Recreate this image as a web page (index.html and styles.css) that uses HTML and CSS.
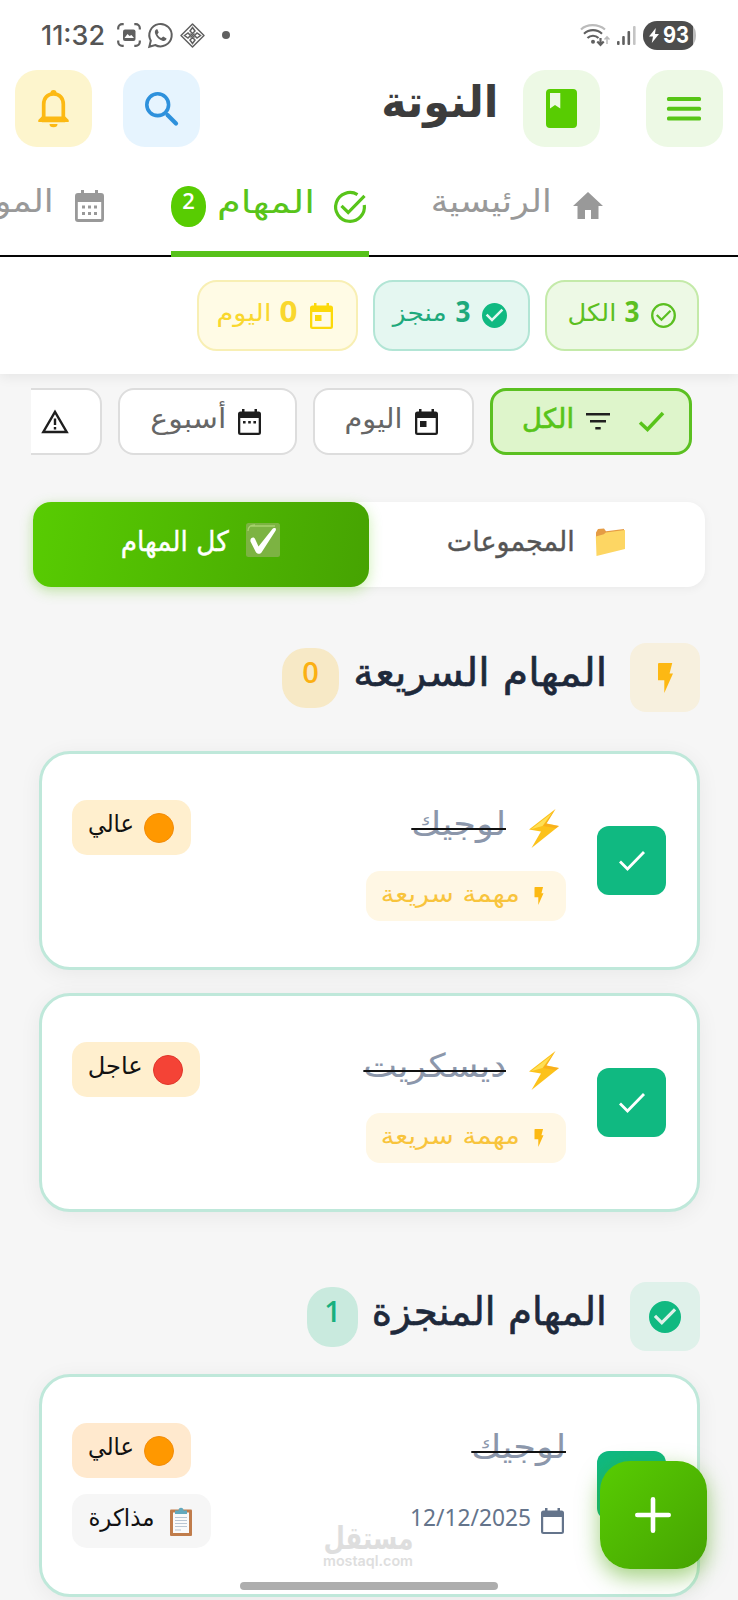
FILE: index.html
```html
<!DOCTYPE html>
<html lang="ar" dir="rtl">
<head>
<meta charset="utf-8">
<title>النوتة</title>
<link rel="stylesheet" href="styles.css">
</head>
<body>
<svg class="defs" width="0" height="0">
  <symbol id="bolt" viewBox="0 0 10 20"><path d="M.5 0h9L7.700 7H10L4.200 20V11.500H0V.5z"/></symbol>
  <symbol id="zap" viewBox="0 0 31 39"><path d="M27.5 0 1 20.500l12 2L3.500 39 31 17l-12.500-2.500z" fill="#fcc21b"/><path d="M27.500 0 18.500 14.500 31 17l-3 2.300-13-2.300z" fill="#f79c1d" opacity=".45"/><path d="M3 20.200 24 4 14.500 17z" fill="#ffdf55"/></symbol>
  <symbol id="checkfill" viewBox="0 0 24 24"><path d="M12 0a12 12 0 1 0 0 24 12 12 0 0 0 0-24zM9.600 18l-6-6 1.700-1.700 4.300 4.300 9.100-9.100L20.400 7.200z"/></symbol>
  <symbol id="tick" viewBox="0 0 28 21"><path d="M2 11.500l7.500 7.500L26 2" fill="none" stroke="currentColor" stroke-width="2.800"/></symbol>
</svg>
<div class="screen">
  <div class="status" dir="ltr">
    <span class="t time" data-w="64">11:32</span>
    <svg class="s-cap" width="24" height="24" viewBox="0 0 24 24"><g fill="none" stroke="#606060" stroke-width="2.200"><path d="M1.200 6.500V5a4 4 0 0 1 4-3.800h1.500M17.300 1.200h1.500a4 4 0 0 1 4 3.800v1.500M22.800 17.500V19a4 4 0 0 1-4 3.800h-1.500M6.700 22.800H5.200a4 4 0 0 1-4-3.800v-1.500"/></g><rect x="6" y="6.500" width="12.500" height="11.500" rx="2" fill="#606060"/><path d="M7.500 15l3-4 2 2 2-1 2.500 3z" fill="#fff"/></svg>
    <svg class="s-wa" width="25" height="25" viewBox="0 0 25 25"><path d="M1.300 23.700l1.500-6A11.200 11.200 0 1 1 7.200 22z" fill="none" stroke="#606060" stroke-width="2"/><path d="M8.500 6.200c-1.600.9-2.300 2.600-1 5.200 1.500 3.100 3.800 5.200 6.800 6.300 2.200.7 3.900-.3 4.300-2.300l-3.400-1.900-1.800 1.600c-2-.8-3.200-2.200-4-3.900l1.300-1.700-1.300-3.200z" fill="#606060"/></svg>
    <svg class="s-dia" width="25" height="25" viewBox="0 0 25 25"><path d="M12.500 1 24 12.500 12.500 24 1 12.500z" fill="none" stroke="#606060" stroke-width="1.500" stroke-linejoin="round"/><path d="M12.500 4.500 15 8l-2.500 2.500L10 8zM12.500 14.500 15 17l-2.500 3.500L10 17zM4.500 12.500 8 10l2.500 2.500L8 15zM14.500 12.500 17 10l3.500 2.500L17 15z" fill="none" stroke="#606060" stroke-width="1.500"/><path d="M10.500 10.500l4 4M14.500 10.500l-4 4" stroke="#606060" stroke-width="1.300"/></svg>
    <i class="dot"></i>
    <svg class="s-wifi" width="30" height="23" viewBox="0 0 30 23"><g fill="none" stroke="#606060" stroke-width="2.200"><path d="M1 5.500C7-.3 18-.3 25 5.500" stroke="#bbb"/><path d="M4 9.700c5-4.700 13-4.700 18 0M7.500 14c3-3 8-3 11 0"/><path d="M20.500 14v6M17.300 17.500l3.200 3.300 3.200-3.300"/><path d="M27 20v-7M24.500 15.500l2.500-2.600 2.500 2.600" stroke="#bbb" stroke-width="1.500"/></g><circle cx="13" cy="17.700" r="2" fill="#606060"/></svg>
    <svg class="s-sig" width="19" height="19" viewBox="0 0 19 19"><g fill="#606060"><rect x="0" y="15" width="2.600" height="4" rx="1"/><rect x="5.200" y="10" width="2.600" height="9" rx="1"/><rect x="10.500" y="5" width="2.600" height="14" rx="1"/><rect x="16" y="0" width="2.600" height="19" rx="1" fill="#c4c4c4"/></g></svg>
    <div class="batt"><svg width="10" height="15" viewBox="0 0 10 15"><path d="M6.800 0L0 8.600h4L2.800 15 10 6H6z" fill="#fff"/></svg><span class="t" data-w="26">93</span></div>
  </div>

  <header class="top">
    <div class="sq green"><svg width="34" height="24" viewBox="0 0 34 24"><g fill="#57c516"><rect width="34" height="4" rx="1.500"/><rect y="9.700" width="34" height="4" rx="1.500"/><rect y="19.400" width="34" height="4" rx="1.500"/></g></svg></div>
    <div class="sq green book"><svg width="31" height="39" viewBox="0 0 31 39"><path d="M4 0h23a4 4 0 0 1 4 4v31a4 4 0 0 1-4 4H4a4 4 0 0 1-4-4V4a4 4 0 0 1 4-4zM4 4v15.500l5-3.500 5.300 3.500V4z" fill="#58cc02" fill-rule="evenodd"/></svg></div>
    <h1><span class="t" data-w="117">النوتة</span></h1>
    <div class="grow"></div>
    <div class="sq blue"><svg width="33" height="34" viewBox="0 0 33 34"><circle cx="12.700" cy="12.700" r="10.900" fill="none" stroke="#2e91dc" stroke-width="3.600"/><path d="M22.500 23l8.500 8.500" stroke="#2e91dc" stroke-width="4.200" stroke-linecap="round"/></svg></div>
    <div class="sq amber"><svg width="31" height="37" viewBox="0 0 31 37"><path d="M15.500 3.800c-6 0-9.800 4.500-9.800 10.500v16h19.600v-16c0-6-3.800-10.500-9.800-10.500z" fill="none" stroke="#fcb913" stroke-width="3.700"/><path d="M12.500 4.500V3a3 3 0 0 1 6 0v1.500zM.3 32v-2l3.500-3.500h23.400l3.500 3.500v2zM11.500 34h8a4 3.200 0 0 1-8 0z" fill="#fcb913"/></svg></div>
  </header>

  <nav class="tabs">
    <div class="tab home"><svg width="30" height="27" viewBox="0 0 30 27"><path d="M12 27v-9h6v9h7.500V14H30L15 0 0 14h4.500v13z" fill="#999"/></svg><span class="t" data-w="121">الرئيسية</span></div>
    <div class="tab active"><svg width="32" height="32" viewBox="0 0 32 32"><g fill="none" stroke="#58c41a" stroke-width="3.200"><path d="M23.500 3.600A14.400 14.400 0 1 0 30.300 14"/><path d="M7.500 14.800l6.700 6.700L30.500 4.800"/></g></svg><span class="t" data-w="98">المهام</span><b class="count"><span>2</span></b></div>
    <div class="tab cal"><svg width="29" height="32" viewBox="0 0 29 32"><path d="M3 3h3V0h3v3h11V0h3v3h3a3 3 0 0 1 3 3v23a3 3 0 0 1-3 3H3a3 3 0 0 1-3-3V6a3 3 0 0 1 3-3zM2.800 12v17h23.400V12z" fill="#999" fill-rule="evenodd"/><g fill="#999"><path d="M7 15.500h3v3H7zM13 15.500h3v3h-3zM19 15.500h3v3h-3zM7 22h3v3H7zM13 22h3v3h-3zM19 22h3v3h-3z"/></g></svg><span class="t" data-w="120">المواعيد</span></div>
  </nav>

  <section class="stats">
    <div class="chip c-green"><svg width="25" height="25" viewBox="0 0 25 25"><g fill="none" stroke="currentColor" stroke-width="2.300"><circle cx="12.500" cy="12.500" r="11.300"/><path d="M5.800 12l4.700 4.700L19.500 7.800"/></g></svg><b class="t" data-w="15">3</b><span class="t" data-w="49">الكل</span></div>
    <div class="chip c-teal"><svg width="25" height="25" fill="#10b981"><use href="#checkfill"/></svg><b class="t" data-w="15">3</b><span class="t" data-w="54">منجز</span></div>
    <div class="chip c-yellow"><svg width="23" height="26" viewBox="0 0 23 26"><path d="M2.500 2.500H4V0h2.500v2.500h10V0H19v2.500h1.500A2.500 2.500 0 0 1 23 5v18.500a2.500 2.500 0 0 1-2.500 2.500h-18A2.500 2.500 0 0 1 0 23.500V5a2.500 2.500 0 0 1 2.500-2.500zM2.300 9v14.700h18.400V9zM5 12h6.500v6H5z" fill="#fcd90a" fill-rule="evenodd"/></svg><b class="t" data-w="18">0</b><span class="t" data-w="55">اليوم</span></div>
  </section>

  <section class="filters">
    <div class="filter on"><svg class="fk" width="27" height="21" viewBox="0 0 27 21"><path d="M2 11.500l7.500 7L25 2" fill="none" stroke="currentColor" stroke-width="3.500"/></svg><svg width="24" height="17" viewBox="0 0 24 17"><g fill="#202020"><rect width="24" height="2.500"/><rect x="4" y="7" width="16" height="2.500"/><rect x="9.300" y="14" width="5.400" height="2.500"/></g></svg><span class="t" data-w="52">الكل</span></div>
    <div class="filter f2"><svg width="23" height="26" viewBox="0 0 23 26"><path d="M2.500 2.500H4V0h2.500v2.500h10V0H19v2.500h1.500A2.500 2.500 0 0 1 23 5v18.500a2.500 2.500 0 0 1-2.500 2.500h-18A2.500 2.500 0 0 1 0 23.500V5a2.500 2.500 0 0 1 2.500-2.500zM2.300 9v14.700h18.400V9zM5 12h6.500v6H5z" fill="#1e1e1e" fill-rule="evenodd"/></svg><span class="t" data-w="58">اليوم</span></div>
    <div class="filter f3"><svg width="23" height="26" viewBox="0 0 23 26"><path d="M2.500 2.500H4V0h2.500v2.500h10V0H19v2.500h1.500A2.500 2.500 0 0 1 23 5v18.500a2.500 2.500 0 0 1-2.500 2.500h-18A2.500 2.500 0 0 1 0 23.500V5a2.500 2.500 0 0 1 2.500-2.500zM2.300 9v14.700h18.400V9zM5 12h2.600v2.600H5zM10.200 12h2.600v2.600h-2.600zM15.400 12H18v2.600h-2.600z" fill="#1e1e1e" fill-rule="evenodd"/></svg><span class="t" data-w="76">أسبوع</span></div>
    <div class="filter f4"><svg width="28" height="25" viewBox="0 0 28 25"><path d="M14 2.800L2.300 23h23.400z" fill="none" stroke="#1e1e1e" stroke-width="2.400"/><path d="M12.800 9.500h2.400v6.500h-2.400zM12.800 18h2.400v2.400h-2.400z" fill="#1e1e1e"/></svg></div>
  </section>

  <section class="segment">
    <div class="seg"><svg width="31" height="28" viewBox="0 0 31 28"><path d="M1 4.500L3 1l6-.5 2 2.800L29 1v8H1z" fill="#e59c44"/><path d="M.8 8.500l8-2.300 2-1.700L30 2v19L1.500 28z" fill="#fdd663"/></svg><span class="t" data-w="128">المجموعات</span></div>
    <div class="seg on"><svg width="34" height="34" viewBox="0 0 34 34"><rect width="34" height="34" rx="2.500" fill="#7cb342"/><path d="M2 8q0-6 7-6M4 3h25" fill="none" stroke="#a6d26d" stroke-width="1.300"/><path d="M4.500 18.500c-.8-3.700 3.500-5.500 4.700-2.300l3.300 7.300L26 6.500c2.200-2.700 5.200-1.400 3.400 1.500L15.500 29.500c-1.200 1.800-4.500 1.800-5.700-.5z" fill="#fff"/></svg><span class="t" data-w="108">كل المهام</span></div>
  </section>

  <div class="head h1st">
    <div class="hicon amb"><svg width="15" height="30" fill="#fdb813"><use href="#bolt"/></svg></div>
    <h2><span class="t" data-w="254">المهام السريعة</span></h2>
    <div class="num amb"><span>0</span></div>
  </div>

  <article class="card">
    <div class="box"><svg width="28" height="21"><use href="#tick"/></svg></div>
    <div class="body">
      <div class="title"><svg class="zap" width="31" height="39"><use href="#zap"/></svg><s class="t" data-w="95">لوجيك</s></div>
      <div class="tag"><svg width="10" height="18" fill="#fcb913"><use href="#bolt"/></svg><span class="t" data-w="139">مهمة سريعة</span></div>
    </div>
    <div class="side"><div class="pill"><i class="ball"></i><span class="t" data-w="46">عالي</span></div></div>
  </article>

  <article class="card second">
    <div class="box"><svg width="28" height="21"><use href="#tick"/></svg></div>
    <div class="body">
      <div class="title"><svg class="zap" width="31" height="39"><use href="#zap"/></svg><s class="t" data-w="143">ديسكريت</s></div>
      <div class="tag"><svg width="10" height="18" fill="#fcb913"><use href="#bolt"/></svg><span class="t" data-w="139">مهمة سريعة</span></div>
    </div>
    <div class="side"><div class="pill"><i class="ball red"></i><span class="t" data-w="55">عاجل</span></div></div>
  </article>

  <div class="head h2nd">
    <div class="hicon teal"><svg width="32" height="32" fill="#10b981"><use href="#checkfill"/></svg></div>
    <h2><span class="t" data-w="235">المهام المنجزة</span></h2>
    <div class="num teal"><span>1</span></div>
  </div>

  <article class="card third">
    <div class="box"></div>
    <div class="body">
      <div class="title plain"><s class="t" data-w="95">لوجيك</s></div>
      <div class="date"><svg width="23" height="26" viewBox="0 0 23 26"><path d="M2.500 2.500H4V0h2.500v2.500h10V0H19v2.500h1.500A2.500 2.500 0 0 1 23 5v18.500a2.500 2.500 0 0 1-2.500 2.500h-18A2.500 2.500 0 0 1 0 23.500V5a2.500 2.500 0 0 1 2.500-2.500zM2.200 9v14.900h18.600V9z" fill="#64748b" fill-rule="evenodd"/></svg><span class="t" data-w="121" dir="ltr">12/12/2025</span></div>
    </div>
    <div class="side">
      <div class="pill peach"><i class="ball"></i><span class="t" data-w="46">عالي</span></div>
      <div class="pill gray"><svg width="22" height="29" viewBox="0 0 22 29"><rect y="2.500" width="22" height="26.500" rx="1" fill="#c07c4b"/><path d="M3 5.500h16V26H3z" fill="#fafafa"/><path d="M5 10.500h12M5 13.500h12M5 16.500h12M5 19.500h12M5 23h6" stroke="#b9c6d3" stroke-width="1"/><path d="M5 7V3.500h3.500a2.500 2.800 0 0 1 5 0H17V7z" fill="#63a9bd"/></svg><span class="t" data-w="66">مذاكرة</span></div>
    </div>
  </article>

  <div class="mark"><span class="t m-ar" data-w="90">مستقل</span><span class="t m-en" data-w="90" dir="ltr">mostaql.com</span></div>
  <button class="fab"><svg width="36" height="36" viewBox="0 0 36 36"><path d="M18 2.300v31.400M2.300 18h31.400" stroke="#fff" stroke-width="4.600" stroke-linecap="round"/></svg></button>
  <div class="homebar"></div>
</div>
<script src="fit.js"></script>
</body>
</html>
```
FILE: styles.css
```css
* { box-sizing: border-box; }
body { margin: 0; background: #f6f6f6; font-family: "DejaVu Sans", sans-serif; line-height: 1; }
h1, h2 { margin: 0; line-height: 1; }
svg { display: block; flex: none; overflow: visible; }
.defs { position: absolute; }
.screen { position: relative; width: 738px; height: 1600px; overflow: hidden; }
.t { display: inline-block; flex: none; white-space: nowrap; transform-origin: 100% 50%; }
[dir="ltr"] > .t, .t[dir="ltr"], .batt .t { transform-origin: 0 50%; }
.grow { flex: 1; }

.status { display: flex; align-items: center; height: 70px; padding: 0 42px 0 41px; background: #fff; color: #555; }
.time { font: 500 27px/27px Inter, sans-serif; }
.s-cap { margin-left: 12px; }
.s-wa { margin-left: 7px; }
.s-dia { margin-left: 7px; }
.dot { width: 8px; height: 8px; border-radius: 50%; background: #606060; margin-left: 17px; }
.s-wifi { margin-left: auto; }
.s-sig { margin: 0 7px 0 7px; }
.batt { display: flex; align-items: center; gap: 4px; width: 53px; height: 29px; padding-left: 6px; border-radius: 14px; background: linear-gradient(90deg, #4d4d4d 94%, #bdbdbd 94%); color: #fff; font: 700 23px/29px Inter, sans-serif; }

.top { display: flex; height: 77px; padding: 0 15px 0 15px; background: #fff; }
.sq { display: flex; align-items: center; justify-content: center; width: 77px; height: 77px; border-radius: 22px; }
.sq svg { margin-right: 1px; }
.green { background: #edf9e5; }
.book { margin: 0 46px 0 25px; }
.blue { background: #e6f4fe; margin-left: 31px; }
.amber { background: #fdf5cd; }
.top h1 { padding-top: 10px; font-size: 44px; color: #3c3c3c; }

.tabs { display: flex; height: 110px; padding-right: 135px; background: #fff; border-bottom: 2px solid #050505; color: #999; font-size: 31px; }
.tab { display: flex; flex: none; align-items: center; padding-top: 9px; }
.tab .t { margin-bottom: 8px; }
.home { gap: 21px; }
.active { width: 198px; margin: 0 62px 0 67px; padding-right: 3px; color: #58c41a; height: 110px; background: linear-gradient(#58c41a, #58c41a) no-repeat 0 100% / 100% 6px; }
.active .t { margin-right: 19px; }
.cal { gap: 21px; }
.count { display: flex; justify-content: center; width: 35px; height: 41px; margin-right: 11px; padding-top: 2px; border-radius: 17px / 20px; background: #58cc02; color: #fff; font: 600 22px/24px "Open Sans", sans-serif; }

.stats { position: relative; display: flex; gap: 15px; height: 117px; padding: 23px 39px 0 0; background: #fff; box-shadow: 0 3px 12px rgba(0,0,0,.07); }
.chip { display: flex; align-items: center; width: 154px; height: 71px; padding-right: 21px; border: 2px solid; border-radius: 20px; font-size: 24px; }
.chip b { font: 700 29px/29px "Open Sans", sans-serif; padding-bottom: 11px; margin-right: 11px; }
.chip b + .t { margin: 0 9px 5px 0; }
.c-green { background: #edf9e5; border-color: #c4eaa9; color: #5bbf21; }
.c-teal { background: #e5f7f1; border-color: #b2e5d5; color: #1ea97c; width: 157px; }
.c-yellow { background: #fffbe5; border-color: #f8efb4; color: #f9d72e; width: 161px; padding-right: 23px; }
.c-yellow b { margin-right: 12px; }

.filters { display: flex; gap: 16px; height: 67px; margin: 14px 46px 0 31px; overflow: hidden; font-size: 27px; }
.filter { display: flex; flex: none; align-items: center; height: 67px; padding: 0 34px 0 0; gap: 12px; border: 2px solid #ddd; border-radius: 16px; background: #fff; color: #666; }
.filter .t { margin-bottom: 7px; }
.filter.on { width: 202px; padding-right: 24px; border: 3px solid #5bc021; background: #def5cb; color: #58c41a; }
.filter.on .t { -webkit-text-stroke: .6px #58c41a; }
.fk { margin-left: 16px; }
.f2 { width: 161px; }
.f3 { width: 179px; }
.f4 { width: 161px; padding-right: 31px; }

.segment { display: flex; height: 85px; margin: 47px 33px 0; border-radius: 18px; background: #fff; box-shadow: 0 2px 10px rgba(0,0,0,.05); }
.seg { display: flex; flex: 1; align-items: center; justify-content: center; gap: 20px; padding-right: 2px; color: #555; font-size: 28px; }
.seg .t { margin-bottom: 6px; -webkit-text-stroke: .4px currentColor; }
.seg svg { margin-bottom: 6px; }
.seg.on { gap: 17px; border-radius: 18px; background: linear-gradient(100deg, #58cc02, #46a302); color: #fff; box-shadow: 0 4px 14px rgba(88,204,2,.3); }
.seg.on svg { margin-bottom: 9px; }

.head { display: flex; padding-right: 38px; color: #1e293b; }
.head h2 { padding-top: 10px; font-size: 39px; font-weight: 400; margin: 0 23px 0 14px; -webkit-text-stroke: .6px #1e293b; }
.h1st { margin-top: 56px; height: 69px; }
.h2nd { margin-top: 70px; height: 69px; }
.hicon { display: flex; align-items: center; justify-content: center; width: 70px; height: 69px; border-radius: 16px; }
.hicon.amb { background: #f7f0de; }
.hicon.teal { background: #dff1ea; }
.num { display: flex; justify-content: center; height: 60px; margin-top: 5px; padding-top: 8px; border-radius: 24px; font: 600 29px/32px "Open Sans", sans-serif; }
.num.amb { width: 57px; background: #f7e9c6; color: #fbb013; }
.num.teal { width: 51px; background: #c9eade; color: #18b07e; }

.card { display: flex; width: 661px; height: 219px; margin: 39px 38px 0 0; padding: 0 31px 0 30px; border: 3px solid #bfe8da; border-radius: 31px; background: #fff; box-shadow: 0 4px 22px rgba(0,0,0,.06); }
.second { margin-top: 23px; }
.third { margin-top: 23px; height: 223px; }
.box { display: flex; flex: none; align-items: center; justify-content: center; width: 69px; height: 69px; margin-top: 72px; border-radius: 12px; background: #10b981; color: #fff; }
.third .box { margin-top: 74px; }
.body { margin-right: 31px; }
.title { display: flex; height: 117px; padding: 55px 7px 0 0; color: #8c97ab; font-size: 33px; }
.title .t { position: relative; margin: -2px 22px 0 0; text-decoration: none; }
.title .t::after { content: ""; position: absolute; left: 0; right: 0; top: 21px; height: 2px; background: #111; }
.title.plain { padding-right: 0; height: 131px; padding-top: 53px; }
.title.plain .t { margin: 0; }
.tag { display: flex; align-items: center; width: 200px; height: 50px; padding-right: 22px; gap: 14px; border-radius: 14px; background: #fff7e4; color: #f8c43c; font-size: 24px; }
.tag .t { margin-bottom: 5px; }
.date { display: flex; gap: 10px; padding-right: 2px; color: #64748b; font: 400 24px/17px "Noto Sans", sans-serif; }
.side { margin-right: auto; display: flex; flex-direction: column; align-items: flex-end; padding-top: 46px; }
.pill { display: flex; align-items: center; height: 55px; padding: 0 17px 0 16px; gap: 10px; border-radius: 15px; background: #ffefce; color: #111; font-size: 24px; }
.pill .t { margin-bottom: 7px; }
.pill.peach { background: #ffe9ce; }
.pill.gray { height: 54px; margin-top: 16px; padding-right: 19px; gap: 16px; background: #f6f6f6; }
.ball { width: 30px; height: 30px; border-radius: 50%; background: #ff9800; border: 1px solid #f28c0a; }
.ball.red { background: #f44336; border-color: #e0362b; }

.fab { position: absolute; left: 600px; top: 1461px; width: 107px; height: 108px; padding: 0 1px 0 0; display: flex; align-items: center; justify-content: center; border: 0; border-radius: 30px; background: linear-gradient(135deg, #58cc02, #46a302); box-shadow: 0 8px 22px rgba(70,163,2,.5); }
.homebar { position: absolute; left: 240px; top: 1582px; width: 258px; height: 8px; border-radius: 4px; background: #adadad; }
.mark { position: absolute; left: 323px; top: 1523px; display: flex; flex-direction: column; align-items: flex-start; width: 90px; color: #dedede; }
.m-ar { font-size: 31px; font-weight: 700; }
.m-en { align-self: flex-end; font: 600 14px/14px Inter, sans-serif; }
```
FILE: fit.js
```js
document.querySelectorAll('.t').forEach(function (el) {
  var w = parseFloat(el.dataset.w);
  var natural = el.getBoundingClientRect().width;
  var side = getComputedStyle(el).direction === 'ltr' ? 'marginRight' : 'marginLeft';
  el.style.transform = 'scaleX(' + (w / natural) + ')';
  el.style[side] = (w - natural) + 'px';
});
```
